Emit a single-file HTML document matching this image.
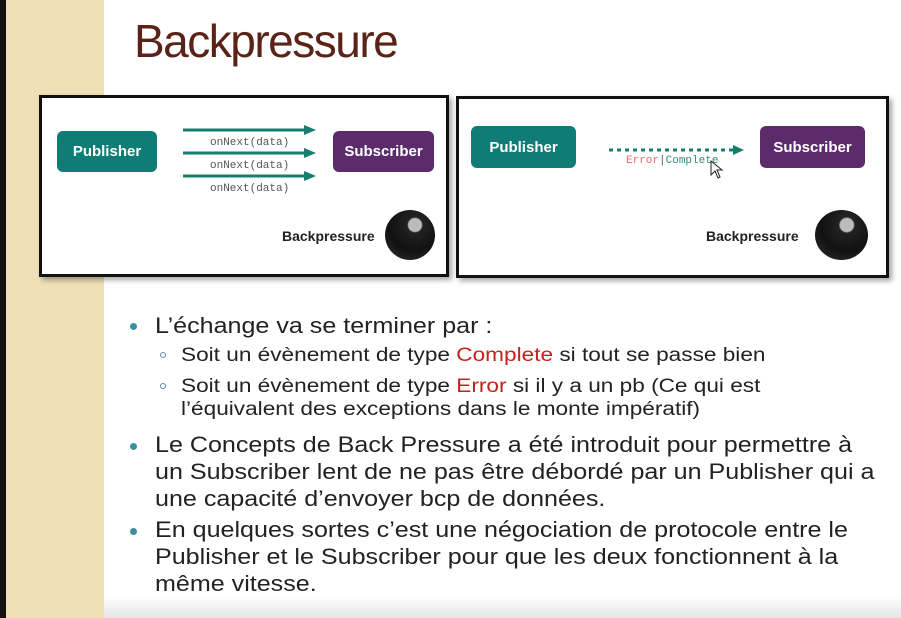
<!DOCTYPE html>
<html><head><meta charset="utf-8"><style>
*{margin:0;padding:0;box-sizing:border-box}
body{width:901px;height:618px;overflow:hidden;background:#fff;position:relative;font-family:"Liberation Sans",sans-serif}
.abs{position:absolute;white-space:nowrap}
.strip{left:0;top:0;width:6px;height:618px;background:#111}
.beige{left:6px;top:0;width:98px;height:618px;background:#f1dfb6}
.bottom{left:104px;top:596px;width:797px;height:22px;background:linear-gradient(#fff,#e6e6e6)}
.title{left:134px;top:14px;font-size:46px;color:#5a2318;letter-spacing:-1.5px}
.panel{border:3px solid #111;background:#fff;box-shadow:3px 3px 5px rgba(0,0,0,.35)}
.pill{color:#fff;font-weight:bold;font-size:15px;text-align:center;border-radius:6px;display:flex;align-items:center;justify-content:center}
.pub{background:#0f7d75}
.sub{background:#5c2b6c}
.mono{font-family:"Liberation Mono",monospace;font-size:11px;color:#555}
.bp{font-weight:bold;font-size:14px;color:#222}
.knob{border-radius:50%;background:radial-gradient(circle at 60% 30%,#bbb 0 14%,#222 17%,#111 55%,#333 100%)}
.t{font-size:22px;color:#222;line-height:27px;transform:scaleX(1.14);transform-origin:0 0}
.s{font-size:19px;color:#222;transform:scaleX(1.19);transform-origin:0 0}
.dot{width:7px;height:7px;border-radius:50%;background:#3a8fa0}
.circ{width:6px;height:6px;border-radius:50%;border:1px solid #5a8ea0}
.r{color:#c0241c}
</style></head><body>
<div class="abs strip"></div>
<div class="abs beige"></div>
<div class="abs bottom"></div>
<div class="abs title">Backpressure</div>

<div class="abs panel" style="left:39px;top:95px;width:410px;height:182px"></div>
<div class="abs pill pub" style="left:57px;top:131px;width:100px;height:41px">Publisher</div>
<div class="abs pill sub" style="left:333px;top:131px;width:101px;height:41px">Subscriber</div>
<svg class="abs" style="left:180px;top:120px" width="140" height="65">
<g stroke="#177d6d" stroke-width="3" fill="#177d6d">
<line x1="3" y1="10" x2="126" y2="10"/><polygon points="124,5 136,10 124,15" stroke="none"/>
<line x1="3" y1="33" x2="126" y2="33"/><polygon points="124,28 136,33 124,38" stroke="none"/>
<line x1="3" y1="56" x2="126" y2="56"/><polygon points="124,51 136,56 124,61" stroke="none"/>
</g></svg>
<div class="abs mono" style="left:210px;top:137px">onNext(data)</div>
<div class="abs mono" style="left:210px;top:160px">onNext(data)</div>
<div class="abs mono" style="left:210px;top:183px">onNext(data)</div>
<div class="abs bp" style="left:282px;top:228px">Backpressure</div>
<div class="abs knob" style="left:385px;top:210px;width:50px;height:50px"></div>

<div class="abs panel" style="left:456px;top:96px;width:433px;height:182px"></div>
<div class="abs pill pub" style="left:471px;top:126px;width:105px;height:42px">Publisher</div>
<div class="abs pill sub" style="left:760px;top:126px;width:105px;height:42px">Subscriber</div>
<svg class="abs" style="left:605px;top:143px" width="140" height="14">
<line x1="4" y1="7" x2="130" y2="7" stroke="#177d6d" stroke-width="3" stroke-dasharray="4,4"/>
<polygon points="128,2 139,7 128,12" fill="#177d6d"/></svg>
<div class="abs mono" style="left:626px;top:155px"><span style="color:#e07070">Error</span>|<span style="color:#3a8a7a">Complete</span></div>
<svg class="abs" style="left:710px;top:160px" width="14" height="20"><path d="M1 1 L1 15 L5 11 L8 18 L10 17 L7 10 L12 10 Z" fill="#fff" stroke="#222" stroke-width="1"/></svg>
<div class="abs bp" style="left:706px;top:228px">Backpressure</div>
<div class="abs knob" style="left:815px;top:210px;width:53px;height:50px"></div>

<div class="abs dot" style="left:130px;top:323px"></div>
<div class="abs t" style="left:155px;top:312px">L’échange va se terminer par :</div>
<div class="abs circ" style="left:160px;top:352px"></div>
<div class="abs s" style="left:181px;top:345px">Soit un évènement de type <span class="r">Complete</span> si tout se passe bien</div>
<div class="abs circ" style="left:160px;top:383px"></div>
<div class="abs s" style="left:181px;top:376px">Soit un évènement de type <span class="r">Error</span> si il y a un pb (Ce qui est</div>
<div class="abs s" style="left:181px;top:399px">l’équivalent des exceptions dans le monte impératif)</div>
<div class="abs dot" style="left:130px;top:443px"></div>
<div class="abs t" style="left:155px;top:431px">Le Concepts de Back Pressure a été introduit pour permettre à<br>un Subscriber lent de ne pas être débordé par un Publisher qui a<br>une capacité d’envoyer bcp de données.</div>
<div class="abs dot" style="left:130px;top:528px"></div>
<div class="abs t" style="left:155px;top:516px">En quelques sortes c’est une négociation de protocole entre le<br>Publisher et le Subscriber pour que les deux fonctionnent à la<br>même vitesse.</div>
</body></html>
